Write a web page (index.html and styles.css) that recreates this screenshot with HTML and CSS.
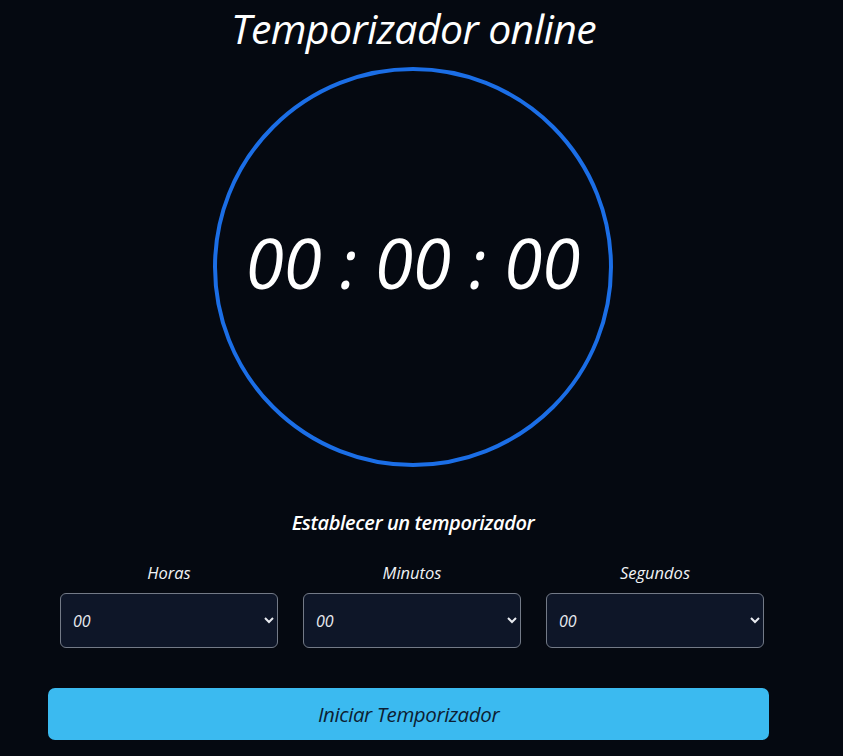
FILE: index.html
```html
<!DOCTYPE html>
<html lang="es">
<head>
<meta charset="utf-8">
<title>Temporizador online</title>
<link rel="stylesheet" href="styles.css">
</head>
<body>
<main class="page">
  <h1 class="title">Temporizador online</h1>
  <div class="dial">
    <span class="time">00 : 00 : 00</span>
  </div>
  <h2 class="subtitle">Establecer un temporizador</h2>
  <section class="setter">
    <div class="fields">
      <label class="field">
        <span class="field-label">Horas</span>
        <select class="field-select"><option>00</option></select>
      </label>
      <label class="field">
        <span class="field-label">Minutos</span>
        <select class="field-select"><option>00</option></select>
      </label>
      <label class="field">
        <span class="field-label">Segundos</span>
        <select class="field-select"><option>00</option></select>
      </label>
    </div>
    <button class="start" type="button">Iniciar Temporizador</button>
  </section>
</main>
</body>
</html>
```

FILE: styles.css
```css
html, body {
  margin: 0;
  padding: 0;
  background: #050911;
  color: #ffffff;
  font-family: "Open Sans", "Noto Sans", sans-serif;
  font-style: italic;
}

.page {
  display: flex;
  flex-direction: column;
  align-items: center;
  width: 843px;
  height: 756px;
  overflow: hidden;
}

.title {
  margin: 0 16px 0 0;
  font-size: 41px;
  font-weight: 400;
  line-height: 56px;
  letter-spacing: -0.6px;
}

.dial {
  margin: 11px 17px 0 0;
  width: 392px;
  height: 392px;
  border: 4px solid #1b6ee6;
  border-radius: 50%;
  display: flex;
  align-items: center;
  justify-content: center;
}

.time {
  font-size: 69px;
  line-height: 1;
  font-weight: 400;
  margin-top: -9px;
}

.subtitle {
  margin: 43px 17px 0 0;
  font-size: 20px;
  font-weight: 600;
  line-height: 26px;
  letter-spacing: -0.4px;
}

.setter {
  width: 721px;
  margin: 26px 26px 0 0;
  display: flex;
  flex-direction: column;
}

.fields {
  margin-left: 12px;
  width: 704px;
  display: grid;
  grid-template-columns: repeat(3, 218px);
  column-gap: 25px;
}

.field {
  display: flex;
  flex-direction: column;
  align-items: center;
  gap: 9px;
}

.field-label {
  font-size: 16.5px;
  line-height: 22px;
  color: #f1f3f6;
}

.field-select {
  color-scheme: dark;
  width: 218px;
  height: 55px;
  box-sizing: border-box;
  background: #0e1628;
  color: #e8ebf0;
  border: 1px solid #737a87;
  border-radius: 6px;
  padding: 0 8px;
  font-family: "Open Sans", "Noto Sans", sans-serif;
  font-style: italic;
  font-size: 16px;
}

.start {
  margin-top: 40px;
  height: 52px;
  width: 721px;
  border: none;
  border-radius: 7px;
  background: #3bbaf0;
  color: #0d1e33;
  font-family: "Open Sans", "Noto Sans", sans-serif;
  font-style: italic;
  font-size: 20.5px;
  letter-spacing: -0.4px;
}
```
